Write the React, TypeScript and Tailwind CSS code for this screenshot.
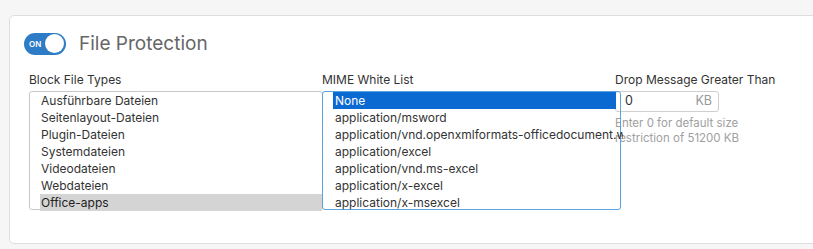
const blockTypes = [
  "Ausführbare Dateien",
  "Seitenlayout-Dateien",
  "Plugin-Dateien",
  "Systemdateien",
  "Videodateien",
  "Webdateien",
  "Office-apps",
];

const mimeTypes = [
  "None",
  "application/msword",
  "application/vnd.openxmlformats-officedocument.wordprocessingml.document",
  "application/excel",
  "application/vnd.ms-excel",
  "application/x-excel",
  "application/x-msexcel",
];

export default function App() {
  return (
    <div
      className="w-[813px] h-[249px] bg-[#f6f6f6] pt-[15px] pl-[9px] overflow-hidden"
      style={{ fontFamily: "Inter, 'Noto Sans', sans-serif" }}
    >
      <div className="w-[830px] h-[229px] bg-white border border-[#dedede] rounded-[5px] pt-[16px] pl-[14px]">
        {/* header */}
        <div className="flex items-center gap-[13px] h-[23px]">
          <div className="w-[42px] h-[22px] rounded-full bg-[#2f7cc6] flex items-center justify-between pl-[5px] pr-[2px]">
            <span className="text-[8px] font-semibold text-white leading-none">ON</span>
            <span className="w-[19px] h-[19px] rounded-full bg-white" />
          </div>
          <span className="text-[19px] text-[#666] leading-none">File Protection</span>
        </div>

        {/* columns */}
        <div className="flex mt-[16px] pl-[5px] text-[12px] text-[#333]">
          <div className="w-[293px] shrink-0">
            <div className="h-[18px] leading-[18px]">Block File Types</div>
            <div className="mt-[2px] w-[294px] h-[119px] border border-[#c8c8c8] rounded-[3px] pl-[10px]">
              {blockTypes.map((t, i) => (
                <div
                  key={t}
                  className={
                    "h-[17px] leading-[17px] pl-[1px] " +
                    (i === blockTypes.length - 1 ? "bg-[#d4d4d4] text-[#222]" : "")
                  }
                >
                  {t}
                </div>
              ))}
            </div>
          </div>

          <div className="w-[293px] shrink-0 relative z-10">
            <div className="h-[18px] leading-[18px]">MIME White List</div>
            <div className="mt-[2px] w-[299px] h-[119px] border border-[#5ba3de] rounded-[3px] pl-[10px]">
              {mimeTypes.map((t, i) => (
                <div
                  key={t}
                  className={
                    "h-[17px] leading-[17px] whitespace-nowrap overflow-hidden pl-[2px] " +
                    (i === 0 ? "bg-[#0b69d2] text-white w-[283px]" : "w-[290px]")
                  }
                >
                  {t}
                </div>
              ))}
            </div>
          </div>

          <div className="shrink-0">
            <div className="h-[18px] leading-[18px]">Drop Message Greater Than</div>
            <div className="mt-[2px] w-[104px] h-[21px] border border-[#cfcfcf] rounded-[3px] flex items-center justify-between pl-[9px] pr-[6px] text-[12.5px]">
              <span className="text-[#333]">0</span>
              <span className="text-[#999]">KB</span>
            </div>
            <div className="mt-[4px] text-[11.5px] leading-[15px] text-[#a0a0a0]">
              <div>Enter 0 for default size</div>
              <div>restriction of 51200 KB</div>
            </div>
          </div>
        </div>
      </div>
    </div>
  );
}
